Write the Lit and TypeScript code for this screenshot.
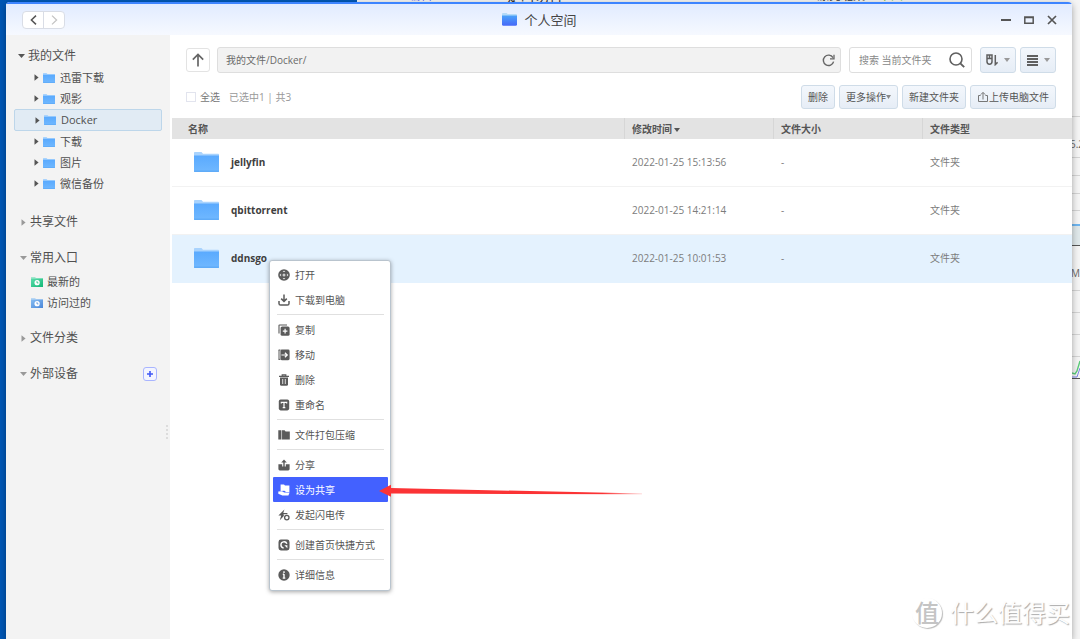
import { LitElement, html, svg, css, nothing } from "lit";
import { customElement, property } from "lit/decorators.js";
import { classMap } from "lit/directives/class-map.js";

const base = css`
  :host {
    font-family: "Open Sans", "Noto Sans CJK SC", sans-serif;
    font-size: 10px;
    line-height: 16px;
    color: #555;
  }
  * {
    box-sizing: border-box;
  }
  button,
  input {
    font: inherit;
    color: inherit;
    margin: 0;
    padding: 0;
    border: 0;
    background: none;
  }
  svg {
    display: block;
    flex: none;
  }
`;

const folder = (w: number, h: number) => html`
  <svg width=${w} height=${h} viewBox="0 0 25 20" preserveAspectRatio="none" aria-hidden="true">
    <defs>
      <linearGradient id="f" x1="0" y1="0" x2="0" y2="1">
        <stop offset="0" stop-color="#5aaafe" />
        <stop offset="1" stop-color="#70b8ff" />
      </linearGradient>
    </defs>
    <path d="M0 .8Q0 0 .8 0H7.5L9 1.8H24.2Q25 1.8 25 2.6V6H0Z" fill="#a9d3fd" />
    <path d="M0 3.6H25V19.2Q25 20 24.2 20H.8Q0 20 0 19.2Z" fill="url(#f)" />
    <path d="M0 18.6H25V19.4L24.2 20H.8L0 19.4Z" fill="#5fabf8" />
  </svg>
`;

const down = (c: string) =>
  html`<svg width="7" height="4" viewBox="0 0 7 4" aria-hidden="true"><path d="M0 0H7L3.5 4Z" fill=${c} /></svg>`;
const right = (c: string) =>
  html`<svg width="5" height="7" viewBox="0 0 5 7" aria-hidden="true"><path d="M.5 .3L4.6 3.5L.5 6.7Z" fill=${c} /></svg>`;

const G = "#5b5b5b";
const menuIcons: Record<string, unknown> = {
  open: svg`<circle cx="6" cy="6" r="5.8" fill=${G}/><path d="M6 1.5L7.4 3.1H4.6ZM6 10.5L7.4 8.9H4.6ZM1.5 6L3.1 4.6V7.4ZM10.5 6L8.9 4.6V7.4Z" fill="#ddd"/><circle cx="6" cy="6" r="1.5" fill="#ccc"/>`,
  download: svg`<path d="M6 .5V7M3.2 4.6L6 7.4L8.8 4.6" fill="none" stroke=${G} stroke-width="1.5"/><path d="M1 7V9.4Q1 11 2.6 11H9.4Q11 11 11 9.4V7" fill="none" stroke=${G} stroke-width="1.5"/>`,
  copy: svg`<path d="M1 9.5V1.6Q1 1 1.6 1H9" fill="none" stroke=${G} stroke-width="1.1"/><rect x="2.6" y="2.4" width="9" height="9.4" rx="1.6" fill=${G}/><path d="M7.1 4.8V9.4M4.8 7.1H9.4" stroke="#fff" stroke-width="1.2"/>`,
  move: svg`<path d="M1 1V10.6M.6 1H2.4M.6 10.4H2.4" stroke=${G} stroke-width="1"/><rect x="2.4" y=".6" width="9.2" height="10.6" rx="1.4" fill=${G}/><path d="M3.4 6H9.3M6.9 3.7L9.3 6L6.9 8.3" fill="none" stroke="#fff" stroke-width="1.2"/>`,
  remove: svg`<path d="M1 2.4H11M4.2 2V.8H7.8V2" fill="none" stroke=${G} stroke-width="1.2"/><path d="M2 3.6H10V10.4Q10 11.8 8.6 11.8H3.4Q2 11.8 2 10.4Z" fill=${G}/><path d="M4.7 5V10M7.3 5V10" stroke="#ddd" stroke-width="1"/>`,
  rename: svg`<rect x=".8" y=".6" width="10.4" height="10.8" rx="1.8" fill=${G}/><path d="M3.3 4.4V3.3H8.7V4.4M6 3.3V8.7M4.7 8.7H7.3" fill="none" stroke="#fff" stroke-width="1.2"/>`,
  zip: svg`<path d="M.3 1.2H3.2V10.4H.3ZM4 1.2H6.6L7.6 2.6H11.8V10.4H4Z" fill=${G}/><path d="M3.6 1.5V10.4" stroke="#aaa" stroke-width=".8"/>`,
  share: svg`<path d="M.4 5.2H4.2V7.4H7.8V5.2H11.6V10Q11.6 11.4 10.2 11.4H1.8Q.4 11.4 .4 10Z" fill=${G}/><path d="M6 9V2" stroke=${G} stroke-width="1.4"/><path d="M3.2 3.6L6 .6L8.8 3.6Z" fill=${G}/>`,
  shared: svg`<path d="M2.6 .6H6L7 1.6H11.4V8H8L6.4 6.8L2.6 7Z" fill="#fff"/><path d="M.3 7.6L4 7.2L6.2 8.6H11.6L10.4 11.4H4.4L.3 9.8Z" fill="#fff"/>`,
  flash: svg`<path d="M6.4 .4L.4 6.4H3.2L1.8 11.2L5.8 7V5.2H4.9Z" fill=${G}/><path d="M4.8 4.6H9.4" stroke=${G} stroke-width="1.2"/><circle cx="8.8" cy="8.6" r="2.2" fill="none" stroke=${G} stroke-width="1.3"/>`,
  shortcut: svg`<rect x=".5" y=".5" width="11" height="11" rx="2.4" fill=${G}/><path d="M8.9 4.8A3.1 3.1 0 1 0 5.6 9" fill="none" stroke="#fff" stroke-width="1.4"/><path d="M6.4 6.2H9.4V9.2Z" fill="#fff"/>`,
  info: svg`<circle cx="6" cy="6" r="5.7" fill=${G}/><path d="M6 2.3V3.9M6 5V9M4.8 5.3H6M4.7 9.1H7.3" stroke="#fff" stroke-width="1.4"/>`,
};

type Entry = [icon: string, label: string];
const menuGroups: Entry[][] = [
  [["open", "打开"], ["download", "下载到电脑"]],
  [["copy", "复制"], ["move", "移动"], ["remove", "删除"], ["rename", "重命名"]],
  [["zip", "文件打包压缩"]],
  [["share", "分享"], ["shared", "设为共享"], ["flash", "发起闪电传"]],
  [["shortcut", "创建首页快捷方式"]],
  [["info", "详细信息"]],
];

@customElement("context-menu")
export class ContextMenu extends LitElement {
  @property() active = "";

  static styles = [
    base,
    css`
      :host {
        display: block;
        padding: 1px 2px 3px 3px;
        background: #fff;
        border: 1px solid #b9c4ce;
        border-radius: 3px;
        box-shadow: 0 1px 4px rgba(0, 0, 0, 0.35);
      }
      .group + .group {
        border-top: 1px solid #e0e0e0;
      }
      .group {
        margin: 0 4px;
        padding: 2px 0;
      }
      .group:first-child {
        padding-top: 0;
      }
      .group:last-child {
        padding-bottom: 0;
      }
      .item {
        display: flex;
        align-items: center;
        gap: 5px;
        width: calc(100% + 8px);
        height: 25px;
        margin: 0 -4px;
        padding: 0 5px;
        white-space: nowrap;
        color: #555;
      }
      .active {
        background: #4361ff;
        color: #fff;
        border-radius: 1px;
      }
    `,
  ];

  render() {
    return menuGroups.map(
      (g) => html`<div class="group" role="group">
        ${g.map(
          ([icon, label]) => html`<button
            role="menuitem"
            class=${classMap({ item: true, active: icon === this.active })}
          >
            <svg width="12" height="12" viewBox="0 0 12 12" aria-hidden="true">${menuIcons[icon]}</svg>
            ${label}
          </button>`
        )}
      </div>`
    );
  }
}

@customElement("side-nav")
export class SideNav extends LitElement {
  static styles = [
    base,
    css`
      :host {
        display: flex;
        flex-direction: column;
        gap: 14px;
        position: relative;
        padding: 10px 8px;
        background: #f3f3f3;
        color: #505050;
      }
      ul {
        list-style: none;
        margin: 0;
        padding: 0;
      }
      .head {
        display: flex;
        align-items: center;
        height: 22px;
        padding: 0 5px 0 6px;
        font-size: 12px;
      }
      .toggle {
        display: flex;
        align-items: center;
        gap: 3px;
      }
      .toggle svg {
        width: 7px;
      }
      .files {
        padding-bottom: 3px;
      }
      .files .head {
        padding-left: 4px;
      }
      .link {
        display: flex;
        align-items: center;
        gap: 4px;
        height: 21px;
        padding-left: 20px;
        font-size: 11px;
        color: inherit;
        text-decoration: none;
      }
      .link .label {
        padding-left: 1px;
      }
      .selected {
        height: 22px;
        background: #e1ebf4;
        border: 1px solid #bdd6ea;
        border-radius: 2px;
      }
      .quick {
        padding-top: 2px;
      }
      .quick .link {
        padding-left: 17px;
        gap: 3px;
      }
      .add {
        display: grid;
        place-items: center;
        width: 14px;
        height: 14px;
        margin-left: auto;
        background: #f3f5ff;
        border: 1px solid #a9b5ff;
        border-radius: 3px;
      }
      .grip {
        position: absolute;
        right: 2px;
        top: 390px;
        height: 14px;
        border-left: 2px dotted #dcdcdc;
      }
    `,
  ];

  private head(label: string, open: boolean, color = "#999", extra: unknown = nothing) {
    return html`<div class="head">
      <button class="toggle" aria-expanded=${open}>${open ? down(color) : right(color)}${label}</button>${extra}
    </div>`;
  }

  private clock(id: string, a: string, b: string) {
    return html`<svg width="12" height="10" viewBox="0 0 12 10" aria-hidden="true">
      <defs>
        <linearGradient id=${id} x1="0" y1="0" x2="1" y2="1">
          <stop offset="0" stop-color=${a} />
          <stop offset="1" stop-color=${b} />
        </linearGradient>
      </defs>
      <path d="M0 0H4L5 1H12V3H0Z" fill=${a} opacity=".55" />
      <path d="M0 1.6H12V10H0Z" fill=${`url(#${id})`} />
      <circle cx="6.1" cy="5.7" r="2.6" fill="#fff" />
      <path d="M6 4.2V5.9H7.4" fill="none" stroke=${b} stroke-width=".8" />
    </svg>`;
  }

  render() {
    const files = ["迅雷下载", "观影", "Docker", "下载", "图片", "微信备份"];
    return html`
      <section class="files">
        ${this.head("我的文件", true, "#555")}
        <ul>
          ${files.map(
            (f) => html`<li>
              <a href="#" class=${classMap({ link: true, selected: f === "Docker" })}>
                ${right("#555")}${folder(12, 10)}<span class="label">${f}</span>
              </a>
            </li>`
          )}
        </ul>
      </section>
      <section>${this.head("共享文件", false)}</section>
      <section>
        ${this.head("常用入口", true)}
        <ul class="quick">
          <li><a href="#" class="link">${this.clock("g", "#5ddcac", "#12b877")}<span class="label">最新的</span></a></li>
          <li><a href="#" class="link">${this.clock("b", "#87bdf2", "#4a86d8")}<span class="label">访问过的</span></a></li>
        </ul>
      </section>
      <section>${this.head("文件分类", false)}</section>
      <section>
        ${this.head(
          "外部设备",
          true,
          "#999",
          html`<button class="add" aria-label="添加">
            <svg width="8" height="8" viewBox="0 0 8 8"><path d="M4 1V7M1 4H7" stroke="#4058f5" stroke-width="1.6" /></svg>
          </button>`
        )}
      </section>
      <span class="grip"></span>
    `;
  }
}

@customElement("file-pane")
export class FilePane extends LitElement {
  static styles = [
    base,
    css`
      :host {
        display: block;
        min-width: 0;
        padding: 12px 0 0 2px;
        background: #fff;
      }
      .bar {
        display: flex;
        align-items: center;
        padding: 0 16px 0 14px;
      }
      .up {
        display: grid;
        place-items: center;
        width: 24px;
        height: 24px;
        margin-right: 7px;
        border: 1px solid #e3e3e3;
        border-radius: 3px;
      }
      .field {
        display: flex;
        align-items: center;
        height: 26px;
        border: 1px solid #dedede;
        border-radius: 3px;
      }
      .path {
        flex: 1;
        min-width: 0;
        padding: 0 5px 0 8px;
        background: #f2f2f2;
        margin-right: 8px;
      }
      .field input {
        flex: 1;
        min-width: 0;
        outline: 0;
        color: #6a6a6a;
      }
      .search {
        width: 123px;
        padding: 0 6px 0 9px;
        margin-right: 8px;
      }
      .search input::placeholder {
        color: #888;
        opacity: 1;
      }
      .btn {
        display: flex;
        align-items: center;
        justify-content: center;
        height: 24px;
        padding: 0 6px;
        white-space: nowrap;
        background: linear-gradient(#f3f7fc, #e6edf6);
        border: 1px solid #cfdce8;
        border-radius: 3px;
      }
      .view {
        width: 36px;
        height: 26px;
        gap: 6px;
      }
      .view + .view {
        margin-left: 4px;
      }
      .actions {
        gap: 4px;
        padding-top: 12px;
        padding-bottom: 9px;
      }
      .all {
        display: flex;
        align-items: center;
        gap: 4px;
        color: #777;
      }
      .all input {
        appearance: none;
        width: 10px;
        height: 10px;
        border: 1px solid #e2e4ee;
        background: #fff;
      }
      .count {
        flex: 1;
        padding-left: 5px;
        color: #999;
      }
      table {
        width: 100%;
        border-collapse: separate;
        border-spacing: 0;
        table-layout: fixed;
      }
      .date,
      .size {
        width: 149px;
      }
      .kind {
        width: 150px;
      }
      th {
        height: 21px;
        padding: 0 7px;
        text-align: left;
        font-weight: 700;
        background: #e3e3e3;
        border-left: 1px solid #d6d6d6;
      }
      th:first-child {
        padding-left: 16px;
        border-left: 0;
      }
      .sort {
        display: inline-block;
        margin-left: 2px;
        vertical-align: middle;
      }
      td {
        height: 48px;
        padding: 0 8px 1px;
        color: #7c7c7c;
        border-bottom: 1px solid #f2f2f2;
      }
      td:first-child {
        padding-left: 22px;
      }
      .name {
        display: flex;
        align-items: center;
        gap: 12px;
        color: #404040;
        font-weight: 700;
      }
      .chosen td {
        background: #e4f2fe;
        border-color: #e4f2fe;
      }
    `,
  ];

  render() {
    const rows = [
      ["jellyfin", "2022-01-25 15:13:56"],
      ["qbittorrent", "2022-01-25 14:21:14"],
      ["ddnsgo", "2022-01-25 10:01:53"],
    ];
    return html`
      <div class="bar">
        <button class="up" aria-label="上一级">
          <svg width="12" height="14" viewBox="0 0 12 14"><path d="M6 13.4V1.5M.8 6.6L6 1.4L11.2 6.6" fill="none" stroke="#666" stroke-width="1.7" /></svg>
        </button>
        <div class="field path">
          <input aria-label="路径" value="我的文件/Docker/" />
          <button aria-label="刷新">
            <svg width="13" height="13" viewBox="0 0 13 13">
              <path d="M11 3.6A5.2 5.2 0 1 0 11.6 7.6" fill="none" stroke="#666" stroke-width="1.4" />
              <path d="M12 .8V4.8H8" fill="none" stroke="#666" stroke-width="1.3" />
            </svg>
          </button>
        </div>
        <div class="field search">
          <input type="text" aria-label="搜索" placeholder="搜索 当前文件夹" />
          <button aria-label="搜索">
            <svg width="16" height="16" viewBox="0 0 16 16">
              <circle cx="7" cy="7" r="6" fill="none" stroke="#606060" stroke-width="1.6" />
              <path d="M11.3 11.3L15.2 15.2" stroke="#606060" stroke-width="1.9" />
            </svg>
          </button>
        </div>
        <button class="btn view" aria-label="排序" aria-haspopup="menu">
          <svg width="12" height="12" viewBox="0 0 12 12">
            <path d="M1 8V1H6V8M1 4.6H6M3.5 1V4.6M1 7.6Q1 10.2 3.5 10.2Q6 10.2 6 7.6M9.3 1V10.6L11.6 8.4" fill="none" stroke="#606060" stroke-width="1.5" />
          </svg>
          <svg width="6" height="4" viewBox="0 0 6 4"><path d="M0 0H6L3 4Z" fill="#999" /></svg>
        </button>
        <button class="btn view" aria-label="视图" aria-haspopup="menu">
          <svg width="11" height="11" viewBox="0 0 11 11"><path d="M0 1H11M0 4H11M0 7H11M0 10H11" stroke="#606060" stroke-width="1.8" /></svg>
          <svg width="6" height="4" viewBox="0 0 6 4"><path d="M0 0H6L3 4Z" fill="#999" /></svg>
        </button>
      </div>
      <div class="bar actions">
        <label class="all"><input type="checkbox" />全选</label>
        <span class="count">已选中1 | 共3</span>
        <button class="btn">删除</button>
        <button class="btn" aria-haspopup="menu">
          更多操作<svg width="5" height="4" viewBox="0 0 5 4"><path d="M0 0H5L2.5 4Z" fill="#888" /></svg>
        </button>
        <button class="btn">新建文件夹</button>
        <button class="btn">
          <svg width="12" height="12" viewBox="0 0 12 12">
            <path d="M3.6 4.5H1.5V10.5H10.5V4.5H8.4M6 8.5V1.6M3.8 3.6L6 1.4L8.2 3.6" fill="none" stroke="#777" stroke-width="1" />
          </svg>上传电脑文件
        </button>
      </div>
      <table>
        <thead>
          <tr>
            <th>名称</th>
            <th class="date">
              修改时间<svg class="sort" width="6" height="4" viewBox="0 0 6 4"><path d="M0 0H6L3 4Z" fill="#555" /></svg>
            </th>
            <th class="size">文件大小</th>
            <th class="kind">文件类型</th>
          </tr>
        </thead>
        <tbody>
          ${rows.map(
            ([name, date]) => html`<tr class=${classMap({ chosen: name === "ddnsgo" })}>
              <td><div class="name">${folder(25, 20)}${name}</div></td>
              <td>${date}</td>
              <td>-</td>
              <td>文件夹</td>
            </tr>`
          )}
        </tbody>
      </table>
    `;
  }
}

@customElement("app-root")
export class AppRoot extends LitElement {
  static styles = [
    base,
    css`
      :host {
        display: flex;
        position: relative;
        height: 100vh;
        overflow: hidden;
        background: #0057b5;
      }
      .behind {
        position: absolute;
        inset: 0 0 0 357px;
        overflow: hidden;
        background: #f5f5f5;
      }
      .peek {
        position: absolute;
        top: -12px;
        font-size: 12px;
        line-height: 16px;
        color: #333;
        white-space: nowrap;
      }
      .p1 {
        left: 51px;
        color: #5a6cf0;
      }
      .p2 {
        left: 150px;
        font-size: 14px;
      }
      .p3 {
        left: 460px;
      }
      .p4 {
        left: 522px;
        color: #6cc04a;
      }
      .graph {
        position: absolute;
        top: 0;
        right: 0;
      }
      .num {
        position: absolute;
        top: 136px;
        right: -4px;
        color: #666;
      }
      .unit {
        position: absolute;
        top: 265px;
        right: 0;
        color: #666;
      }
      .window {
        position: relative;
        flex: 1;
        min-width: 0;
        display: flex;
        flex-direction: column;
        margin: 2px 8px 0 6px;
        background: #fff;
        border-radius: 4px 4px 0 0;
        box-shadow: 0 2px 7px rgba(0, 0, 0, 0.35);
        overflow: hidden;
      }
      .title {
        display: grid;
        grid-template-columns: 1fr auto 1fr;
        align-items: center;
        height: 33px;
        padding: 0 15px 0 16px;
        border-top: 2px solid #3d84ff;
        background: linear-gradient(#e1ebff, #f6f9ff);
      }
      .history {
        display: flex;
        justify-self: start;
        background: #fff;
        border: 1px solid #d9dde6;
        border-radius: 4px;
      }
      .history button {
        display: grid;
        place-items: center;
        width: 20px;
        height: 16px;
      }
      .history button + button {
        width: 21px;
        border-left: 1px solid #d9dde6;
      }
      .caption {
        display: flex;
        align-items: center;
        gap: 7px;
        margin: 0;
        font-size: 13px;
        line-height: 20px;
        font-weight: 400;
        color: #444;
      }
      .controls {
        display: flex;
        justify-self: end;
        gap: 13px;
      }
      .body {
        flex: 1;
        display: grid;
        grid-template-columns: 164px 1fr;
        min-height: 0;
      }
      .menu {
        position: absolute;
        left: 269px;
        top: 260px;
        width: 122px;
      }
      .pointer {
        position: absolute;
        left: 378px;
        top: 484px;
      }
      .mark {
        position: absolute;
        right: 10px;
        bottom: 9px;
        display: flex;
        align-items: center;
        gap: 8px;
        font-size: 24px;
        line-height: 34px;
        color: #fdfdfd;
        text-shadow: 1px 1px 1px #aaa;
      }
      .seal {
        display: grid;
        place-items: center;
        width: 30px;
        height: 30px;
        line-height: 26px;
        border-radius: 50%;
        box-shadow: 1px 1px 1px #bbb;
        font-weight: 500;
        color: #c4c4c4;
        text-shadow: none;
      }
    `,
  ];

  render() {
    return html`
      <div class="behind" aria-hidden="true">
        <span class="peek p1">编辑</span>
        <span class="peek p2">定时切行</span>
        <span class="peek p3">漂亮班案</span>
        <span class="peek p4">下图</span>
        <svg class="graph" width="8" height="390" viewBox="0 0 8 390">
          <path d="M0 116.5H8M0 157.5H8M0 175.5H8M0 193.5H8M0 210.5H8M0 290.5H8M0 312.5H8M0 334.5H8M0 356.5H8" stroke="#d4d4d4" />
          <rect y="226" width="8" height="19" fill="#dfe8ea" />
          <path d="M0 225H8" stroke="#6db5f0" stroke-width="2" />
          <path d="M0 245.5H8M0 378.5H8" stroke="#555" />
          <path d="M0 373L3 374L5 371L8 361" fill="none" stroke="#5ccb7a" stroke-width="1.4" />
          <path d="M0 377H5L8 368" fill="none" stroke="#7d85e8" />
        </svg>
        <span class="num">5.2</span>
        <span class="unit">M</span>
      </div>
      <main class="window">
        <header class="title">
          <div class="history">
            <button aria-label="后退">
              <svg width="7" height="10" viewBox="0 0 7 10"><path d="M6 .6L1.4 5L6 9.4" fill="none" stroke="#555" stroke-width="1.5" /></svg>
            </button>
            <button aria-label="前进">
              <svg width="7" height="10" viewBox="0 0 7 10"><path d="M1 .6L5.6 5L1 9.4" fill="none" stroke="#c4c4c4" stroke-width="1.3" /></svg>
            </button>
          </div>
          <h1 class="caption">
            <svg width="15" height="13" viewBox="0 0 15 13" aria-hidden="true">
              <defs>
                <linearGradient id="t" x1="0" y1="0" x2="0" y2="1">
                  <stop offset="0" stop-color="#4ba3fa" />
                  <stop offset="1" stop-color="#4668f8" />
                </linearGradient>
              </defs>
              <path d="M0 1Q0 0 1 0H4.6L5.6 1H14Q15 1 15 2V5H0Z" fill="#b4daf8" />
              <path d="M0 2.4H15V11.4Q15 12.8 13.6 12.8H1.4Q0 12.8 0 11.4Z" fill="url(#t)" />
            </svg>
            个人空间
          </h1>
          <div class="controls">
            <button aria-label="最小化"><svg width="10" height="10" viewBox="0 0 10 10"><path d="M0 5H10" stroke="#555" stroke-width="2" /></svg></button>
            <button aria-label="最大化"><svg width="10" height="10" viewBox="0 0 10 10"><path d="M.8 1.9H9.2V8.2H.8ZM.8 2.4H9.2" fill="none" stroke="#555" stroke-width="1.5" /></svg></button>
            <button aria-label="关闭"><svg width="10" height="10" viewBox="0 0 10 10"><path d="M1 1L9 9M9 1L1 9" stroke="#555" stroke-width="1.7" /></svg></button>
          </div>
        </header>
        <div class="body">
          <side-nav></side-nav>
          <file-pane></file-pane>
        </div>
      </main>
      <context-menu class="menu" role="menu" active="shared"></context-menu>
      <svg class="pointer" width="266" height="14" viewBox="0 0 266 14" aria-hidden="true">
        <defs>
          <linearGradient id="r" x1="0" y1="0" x2="1" y2="0">
            <stop offset=".85" stop-color="#fb3335" />
            <stop offset="1" stop-color="#fb3335" stop-opacity=".25" />
          </linearGradient>
        </defs>
        <path d="M1 7L13 .8V4L264 9.6V10.2L13 9.6V12.8Z" fill="url(#r)" />
      </svg>
      <div class="mark"><span class="seal">值</span>什么值得买</div>
    `;
  }
}
